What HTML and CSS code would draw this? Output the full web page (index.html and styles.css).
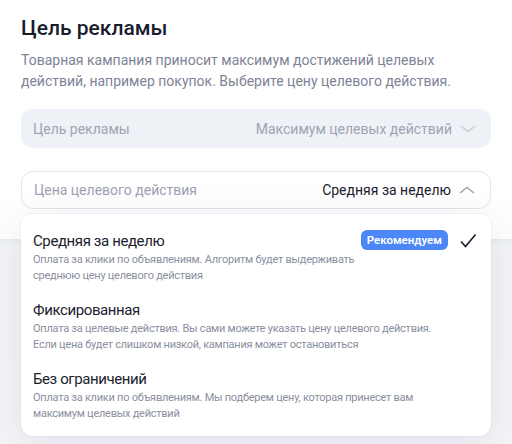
FILE: index.html
```html
<!DOCTYPE html>
<html lang="ru">
<head>
    <meta charset="UTF-8">
    <meta name="viewport" content="width=device-width, initial-scale=1.0">
    <title>Цель рекламы</title>
    <link rel="stylesheet" href="styles.css">
</head>
<body>
    <div class="page">
        <h1>Цель рекламы</h1>
        <p class="lead">Товарная кампания приносит максимум достижений целевых действий, например покупок. Выберите цену целевого действия.</p>

        <div class="field field-disabled">
            <span class="field-label">Цель рекламы</span>
            <span class="field-value">Максимум целевых действий</span>
            <svg class="chevron" width="16" height="16" viewBox="0 0 16 16"><path d="M1 5l7 5.5L15 5" fill="none" stroke="currentColor" stroke-width="1.4"/></svg>
        </div>

        <div class="select">
            <div class="field field-open">
                <span class="field-label">Цена целевого действия</span>
                <span class="field-value">Средняя за неделю</span>
                <svg class="chevron" width="16" height="16" viewBox="0 0 16 16"><path d="M1 11l7-5.5 7 5.5" fill="none" stroke="currentColor" stroke-width="1.4"/></svg>
            </div>

            <ul class="menu">
                <li class="option">
                    <div class="option-text">
                        <div class="option-title">Средняя за неделю</div>
                        <div class="option-desc">Оплата за клики по объявлениям. Алгоритм будет выдерживать среднюю цену целевого действия</div>
                    </div>
                    <span class="badge">Рекомендуем</span>
                    <svg class="check" width="18" height="18" viewBox="0 0 18 18"><path d="M2 9.5l4.5 5L16.5 2.5" fill="none" stroke="#1b1e2e" stroke-width="1.6"/></svg>
                </li>
                <li class="option">
                    <div class="option-text">
                        <div class="option-title">Фиксированная</div>
                        <div class="option-desc">Оплата за целевые действия. Вы сами можете указать цену целевого действия. Если цена будет слишком низкой, кампания может остановиться</div>
                    </div>
                </li>
                <li class="option">
                    <div class="option-text">
                        <div class="option-title">Без ограничений</div>
                        <div class="option-desc">Оплата за клики по объявлениям. Мы подберем цену, которая принесет вам максимум целевых действий</div>
                    </div>
                </li>
            </ul>
        </div>
    </div>
    <div class="next-section"></div>
</body>
</html>
```

FILE: styles.css
```css
body {
    margin: 0;
    font-family: Roboto, "Noto Sans", sans-serif;
    background: #fff;
    color: #1b1e2e;
}
.page {
    padding: 14px 21px 0;
}
h1 {
    margin: 0;
    font-size: 21px;
    line-height: 28px;
    font-weight: 500;
    color: #1a1d2e;
}
.lead {
    margin: 8px 0 0;
    font-size: 14px;
    line-height: 21px;
    color: #7e8396;
}
.field {
    display: flex;
    align-items: center;
    box-sizing: border-box;
    height: 39px;
    padding: 0 15px 0 12px;
    border-radius: 12px;
    font-size: 14px;
}
.field-label {
    flex: 1;
    color: #9ea3b3;
}
.field-value {
    margin-right: 8px;
}
.chevron {
    color: #c8ccd6;
}
.field-disabled {
    margin-top: 17px;
    background: #eef1f6;
}
.field-disabled .field-value {
    color: #9ea3b3;
}
.select {
    position: relative;
    margin-top: 23px;
}
.field-open {
    height: 38px;
    background: #fff;
    border: 1px solid #e2e5ec;
}
.field-open .field-value {
    color: #1b1e2e;
}
.field-open .chevron {
    color: #9ea3b3;
}
.menu {
    position: absolute;
    top: 43px;
    left: 0;
    right: 0;
    z-index: 2;
    margin: 0;
    padding: 17px 12px 14px;
    list-style: none;
    background: #fff;
    border-radius: 12px;
    box-shadow: 0 6px 40px rgba(40, 50, 90, 0.1), 0 0 0 1px rgba(40, 50, 90, 0.03);
}
.option {
    display: flex;
    align-items: flex-start;
    margin-bottom: 16px;
}
.option:last-child {
    margin-bottom: 0;
}
.option-text {
    flex: 1;
}
.option-title {
    font-size: 15px;
    line-height: 20px;
    letter-spacing: -0.4px;
    color: #1b1e2e;
}
.option-desc {
    margin-top: 1px;
    font-size: 11px;
    line-height: 16px;
    letter-spacing: -0.25px;
    color: #8a8fa0;
    max-width: 410px;
}
.badge {
    margin-top: -1px;
    padding: 0 6px;
    height: 20px;
    line-height: 20px;
    border-radius: 6px;
    background: #4c87f7;
    color: #fff;
    font-size: 11.5px;
    font-weight: 600;
}
.check {
    margin: 1px 2px 0 11px;
}
.next-section {
    margin-top: 30px;
    height: 220px;
    background: linear-gradient(#e9ecf1, #f3f4f7 7px, #f4f5f8);
}
```
